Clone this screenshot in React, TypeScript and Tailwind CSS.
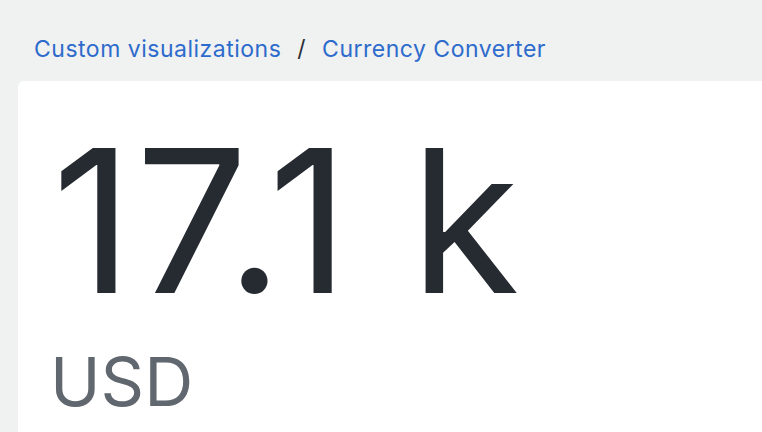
import React from 'react';

const App = () => {
  return (
    <div className="h-screen bg-[#f0f1f1] pl-[18px] pt-[32px] overflow-hidden" style={{ fontFamily: 'Inter, "Noto Sans", sans-serif' }}>
      <nav className="flex items-center pl-4 text-[23px] leading-[34px] tracking-[0.5px] text-[#2d6bcc]">
        <a href="#">Custom visualizations</a>
        <span className="mx-[16px] text-[#2a2f35]">/</span>
        <a href="#">Currency Converter</a>
      </nav>
      <div className="mt-[15px] bg-white rounded-tl-[6px] h-[400px] w-[800px] pl-[34px] pt-[20px]">
        <div className="text-[199px] leading-[240px] tracking-[2.5px] text-[#262b31]">17.1 k</div>
        <div className="mt-[0px] ml-[-2px] text-[68px] leading-[80px] text-[#61676e]">USD</div>
      </div>
    </div>
  );
};

export default App;
